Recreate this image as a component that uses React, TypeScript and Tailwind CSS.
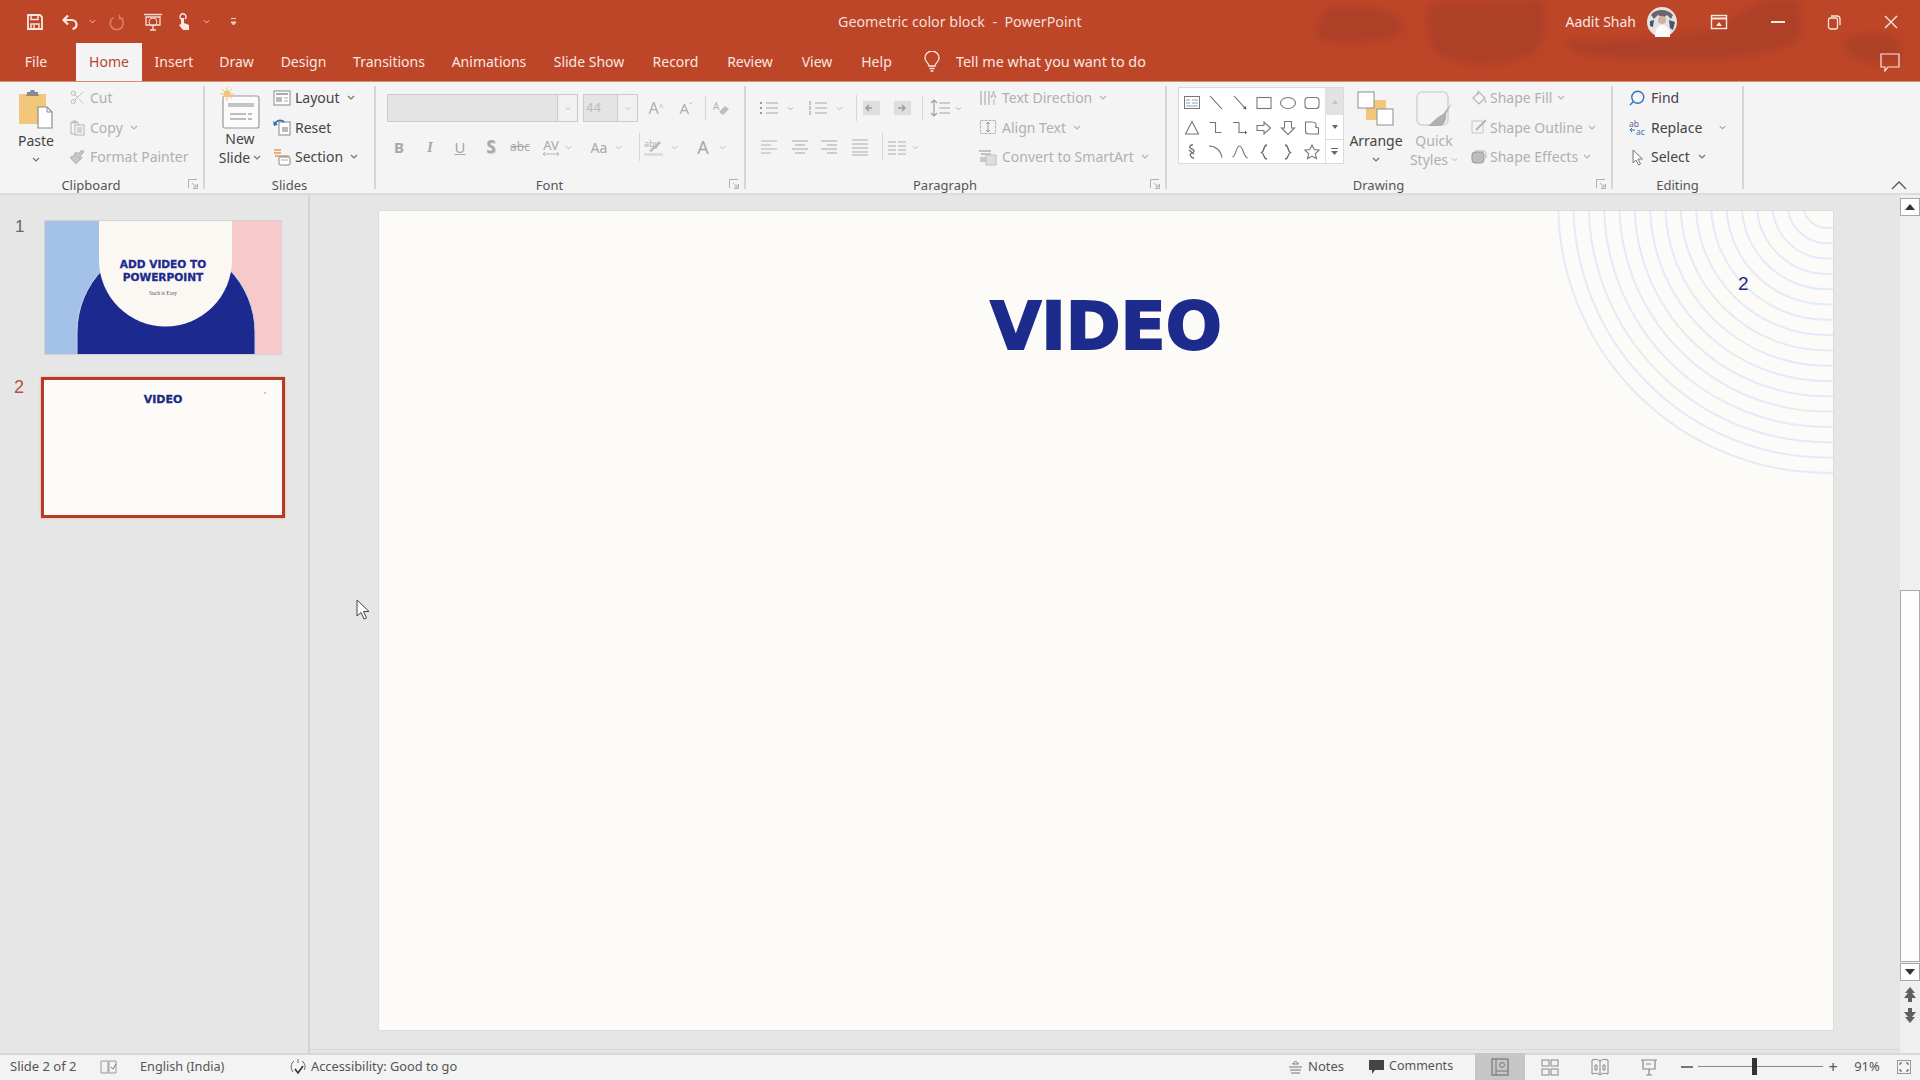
import React from "react";
import { Scissors, Search, Paintbrush } from "lucide-react";

const G = "#b3b3b3";
const K = "#6e6e6e";

function Chev({ c = G, w = 8, className = "" }: { c?: string; w?: number; className?: string }) {
  return (
    <svg width={w} height={5} viewBox="0 0 8 5" className={className}>
      <path d="M1 1l3 3 3-3" fill="none" stroke={c} strokeWidth="1.1" />
    </svg>
  );
}

function Ico({ w = 18, h = 18, children }: { w?: number; h?: number; children: React.ReactNode }) {
  return (
    <svg width={w} height={h} viewBox={`0 0 ${w} ${h}`} fill="none" className="shrink-0">
      {children}
    </svg>
  );
}

function Tab({ w, children, active }: { w: string; children: React.ReactNode; active?: boolean }) {
  return <div className={w + " h-full pb-[1px] flex items-center justify-center " + (active ? "bg-[#f4f4f4] text-[#b5472e]" : "")}>{children}</div>;
}

function Row({ icon, label, chev, dim, iw = "w-[18px]", gap = "gap-[4px]" }: { icon: React.ReactNode; label: string; chev?: boolean; dim?: boolean; iw?: string; gap?: string }) {
  return (
    <div className={"h-[29.5px] flex items-center whitespace-nowrap " + gap + " " + (dim ? "text-[#b0b0b0]" : "text-[#444444]")}>
      <span className={iw + " flex justify-center"}>{icon}</span>
      <span>{label}</span>
      {chev && <Chev c={dim ? G : K} className="ml-[3px]" />}
    </div>
  );
}

function Launcher() {
  return (
    <svg width="10" height="10" viewBox="0 0 10 10" fill="none" className="absolute right-[5px] bottom-[0px]">
      <path d="M.5 9V.5H9M9.5 5v4.5H5M4 4l4 4M8 5.5V8H5.5" stroke="#b0b0b0" />
    </svg>
  );
}

function GroupLabel({ children, launcher }: { children: React.ReactNode; launcher?: boolean }) {
  return <div className={"h-[13px] shrink-0 flex items-center justify-center text-[13px] text-[#555555] leading-none " + (launcher ? "pr-[21px]" : "")}>{children}</div>;
}

function Group({ w, children, label, launcher }: { w: string; children: React.ReactNode; label: string; launcher?: boolean }) {
  return (
    <div className={w + " relative shrink-0 my-[4px] flex flex-col border-r-2 border-[#d6d6d6]"}>
      <div className="h-[93px] shrink-0">{children}</div>
      <GroupLabel launcher={launcher}>{label}</GroupLabel>
      {launcher && <Launcher />}
    </div>
  );
}

function Lines({ ys, x1 = 1, x2 = 17, c = G, sw = 1.2 }: { ys: number[]; x1?: number; x2?: number; c?: string; sw?: number }) {
  return (
    <>
      {ys.map((y) => (
        <path key={y} d={`M${x1} ${y}H${x2}`} stroke={c} strokeWidth={sw} />
      ))}
    </>
  );
}

const shapes: React.ReactNode[] = [
  <><rect x="1.5" y="2.5" width="15" height="12" stroke="#777" /><path d="M3 6h4M3 9h4M9 6h6M9 9h6M3 12h12" stroke="#8aa0c0" /></>,
  <path d="M3 2l12 13" stroke="#666" strokeWidth="1.1" />,
  <><path d="M3 2l11 12" stroke="#666" strokeWidth="1.1" /><path d="M15.5 15.5l-3.5-1 2.5-2.5z" fill="#555" /></>,
  <rect x="2" y="3.5" width="14" height="11" stroke="#777" strokeWidth="1.1" />,
  <ellipse cx="9" cy="9" rx="7.5" ry="5.5" stroke="#777" strokeWidth="1.1" />,
  <rect x="2" y="3.5" width="14" height="11" rx="3" stroke="#777" strokeWidth="1.1" />,
  <path d="M9 2.5l6.5 12.5h-13z" stroke="#777" strokeWidth="1.1" />,
  <path d="M2.5 3.5h6v10h6" stroke="#777" strokeWidth="1.1" />,
  <><path d="M2 3.5h6v10h6" stroke="#777" strokeWidth="1.1" /><path d="M14 11.5l2 2-2 2z" fill="#555" /></>,
  <path d="M2 6.5h7v-3.5l6.5 6-6.5 6v-3.5h-7z" stroke="#777" strokeWidth="1.1" />,
  <path d="M5.5 2.5h7v6.5h3l-6.5 6.5-6.5-6.5h3z" stroke="#777" strokeWidth="1.1" />,
  <path d="M2.5 3h6c4 0 6 2 4 5l3 1v6h-10c-2 0-3-1.5-3-3z" stroke="#777" strokeWidth="1.1" />,
  <path d="M10 1.5C6 2.5 5.5 5 9 6c3 1 2.5 3 0 4-3 1-2 4 2 5.5M6 7l5 4" stroke="#777" strokeWidth="1.4" />,
  <path d="M2 3c6 0 12 4 13 12" stroke="#777" strokeWidth="1.1" />,
  <path d="M1.5 14C5 13 5 3 8.5 3s4 11 8 12" stroke="#777" strokeWidth="1.1" />,
  <path d="M12 2C8 2 10 8 6.5 9.5 10 11 8 16 12 16" stroke="#666" strokeWidth="1.3" />,
  <path d="M6 2c4 0 2 6 5.5 7.5C8 11 10 16 6 16" stroke="#666" strokeWidth="1.3" />,
  <path d="M9 2l2.1 4.6 5 .6-3.7 3.4 1 5-4.4-2.5-4.4 2.5 1-5L1.9 7.2l5-.6z" stroke="#777" strokeWidth="1.1" />,
];

function Thumb1() {
  return (
    <div className="relative w-[238px] h-[135px] ml-[3px] overflow-hidden border border-[#d2d2d2]">
      <svg width="238" height="135" viewBox="0 0 238 135" className="absolute left-0 top-0">
        <rect width="238" height="135" fill="#f6caca" />
        <rect width="55" height="135" fill="#a4c2e8" />
        <path d="M32 135V111a89 89 0 0 1 178 0v24z" fill="#1c2a8f" stroke="#c8d4ee" strokeWidth="1" />
        <path d="M54 0h133v39a66.5 66.5 0 0 1-133 0z" fill="#fbf8f3" />
      </svg>
      <div className="relative flex flex-col items-center pt-[37px] font-['DejaVu_Sans',sans-serif] font-bold text-[#1c2a8f] text-[10.6px] leading-[13px] text-center [-webkit-text-stroke:0.3px_#1c2a8f]">
        <div>ADD VIDEO TO</div>
        <div>POWERPOINT</div>
        <div className="font-['Liberation_Serif',serif] font-normal text-[5.5px] text-[#555577] leading-[8px] mt-[5px] [-webkit-text-stroke:0px]">Such is Easy</div>
      </div>
    </div>
  );
}

function Thumb2() {
  return (
    <div className="relative w-[244px] h-[141px] border-[3px] border-[#b53c22] bg-[#fcfbf7] shadow-[0_0_2px_#e8a08c] flex flex-col items-center">
      <div className="mt-[13px] font-['DejaVu_Sans',sans-serif] font-bold text-[#1c2a7f] text-[11px] leading-[14px] [-webkit-text-stroke:0.3px_#1c2a7f]">VIDEO</div>
      <div className="absolute right-[16px] top-[12px] w-[2px] h-[2px] rounded-full bg-[#b8bccc]" />
    </div>
  );
}

const arcs = Array.from({ length: 17 }, (_, i) => 24 + i * 15.3);

export default function App() {
  return (
    <div className="relative w-[1920px] h-[1080px] overflow-hidden flex flex-col bg-[#e6e6e6] font-['Noto_Sans',sans-serif] text-[14px] text-[#444444]">
      {/* Title bar and tabs */}
      <header className="relative h-[82px] shrink-0 bg-[#bd4528] border-b border-[#d98b76] text-[#f8e8e2]">
        <svg width="640" height="81" viewBox="0 0 640 81" className="absolute right-0 top-0 blur-[3px]">
          <g fill="#a53f28" opacity=".6">
            <path d="M44 10C70 2 110 8 122 22c6 14-20 20-50 20-20 0-40 2-34-14z" />
            <path d="M150 4l112-4c6 20 4 46-14 56-30 12-80 10-94-6-8-16-8-30-4-46z" />
            <path d="M290 40c60 4 110-8 150-10 30-30 40-20 40-30h40c-4 30 10 34-10 44-40 18-120 18-170 14-30-2-60-6-50-18z" />
            <path d="M565 40c20-10 50-8 55 6v16h-30c-14 0-30-10-25-22z" />
          </g>
        </svg>
        <div className="relative h-[43px] flex items-center">
          <div className="w-[838px] flex items-center shrink-0">
            <span className="ml-[26px] w-[18px]">
              <Ico>
                <path d="M2 2h12l2 2v12H2z" stroke="#f8e8e2" strokeWidth="1.8" />
                <path d="M5 2.5v4h7v-4" stroke="#f8e8e2" strokeWidth="1.4" />
                <path d="M5 16v-5h8v5M8 12v3" stroke="#f8e8e2" strokeWidth="1.4" />
              </Ico>
            </span>
            <span className="ml-[17px] w-[18px]">
              <Ico>
                <path d="M7 2.5L2.5 7 7 11.5M3 7h7.5c3 0 5 2 5 4.5s-1.5 4-4 4.5" stroke="#f8e8e2" strokeWidth="2.2" />
              </Ico>
            </span>
            <Chev c="#f0cfc5" w={7} className="ml-[10px]" />
            <span className="ml-[12px] w-[18px] opacity-60">
              <Ico>
                <path d="M12 4.5a6.5 6.5 0 1 1-6.5 0" stroke="#e8a08c" strokeWidth="1.8" />
                <path d="M11.5 1.5v4h4" stroke="#e8a08c" strokeWidth="1.4" />
              </Ico>
            </span>
            <span className="ml-[17px] w-[20px]">
              <Ico w={20} h={20}>
                <path d="M1 2.5h18M3 5h14v8H3zM10 13v5M7 18h6" stroke="#f4dcd4" strokeWidth="1.3" />
                <circle cx="10" cy="10" r="4" stroke="#f4dcd4" />
              </Ico>
            </span>
            <span className="ml-[11px] w-[18px]">
              <Ico>
                <path d="M7 6a3 3 0 1 1 4 0" stroke="#f8e8e2" strokeWidth="1.4" />
                <path d="M7 5h3v5l5 2v5H9l-4-5 2-1z" fill="#f8e8e2" />
              </Ico>
            </span>
            <Chev c="#f0cfc5" w={7} className="ml-[11px]" />
            <span className="ml-[20px]">
              <svg width="7" height="10" viewBox="0 0 7 10"><path d="M1 1.5h5M1 5l2.5 3L6 5z" stroke="#f0cfc5" fill="#f0cfc5" /></svg>
            </span>
          </div>
          <div className="text-[#f4dfd8] text-[14.3px]">Geometric color block&nbsp; -&nbsp; PowerPoint</div>
          <div className="ml-auto flex items-center">
            <span className="text-[#f8e8e2]">Aadit Shah</span>
            <svg width="30" height="30" viewBox="0 0 30 30" className="ml-[11px]">
              <circle cx="15" cy="15" r="15" fill="#e4e2e2" />
              <path d="M4 8C8 2 20 1 26 8l-2 4-4-4-4 3-5-3-4 4z" fill="#6a666c" />
              <path d="M8 30c0-8 3-12 7-12s9 3 8 12z" fill="#fbfbfb" />
              <path d="M22 13l6 2-2 8-3-2zM3 14l4-1-1 7-3-1z" fill="#46566f" />
              <circle cx="15" cy="13" r="4" fill="#d2b0a0" />
            </svg>
            <span className="ml-[33px]">
              <Ico>
                <rect x="1.5" y="2.5" width="15" height="13" stroke="#f8e8e2" strokeWidth="1.4" />
                <path d="M1.5 5.5h15" stroke="#f8e8e2" strokeWidth="2" />
                <path d="M6 13l3-4 3 4z" fill="#f8e8e2" />
              </Ico>
            </span>
            <span className="ml-[43px] w-[14px] h-[2px] bg-[#f8e8e2]" />
            <span className="ml-[42px]">
              <Ico w={14} h={16}>
                <rect x="1.5" y="4" width="9" height="11" rx="2" stroke="#f8e8e2" strokeWidth="1.3" />
                <path d="M4 2h6c2 0 3 1 3 3v6" stroke="#f8e8e2" strokeWidth="1.3" />
              </Ico>
            </span>
            <span className="ml-[42px] mr-[21px]">
              <Ico w={16} h={16}>
                <path d="M2 2l12 12M14 2L2 14" stroke="#f8e8e2" strokeWidth="1.4" />
              </Ico>
            </span>
          </div>
        </div>
        <div className="relative h-[38px] flex items-stretch">
          <Tab w="w-[72px]">File</Tab>
          <div className="w-[4px]" />
          <Tab w="w-[66px]" active>Home</Tab>
          <Tab w="w-[64px]">Insert</Tab>
          <Tab w="w-[61px]">Draw</Tab>
          <Tab w="w-[73px]">Design</Tab>
          <Tab w="w-[98px]">Transitions</Tab>
          <Tab w="w-[102px]">Animations</Tab>
          <Tab w="w-[98px]">Slide Show</Tab>
          <Tab w="w-[75px]">Record</Tab>
          <Tab w="w-[74px]">Review</Tab>
          <Tab w="w-[60px]">View</Tab>
          <Tab w="w-[59px]">Help</Tab>
          <div className="ml-[17px] pb-[1px] flex items-center">
            <svg width="18" height="22" viewBox="0 0 18 22" fill="none">
              <path d="M6 15c0-3-4-4-4-8a7 7 0 0 1 14 0c0 4-4 5-4 8z" stroke="#f8e8e2" strokeWidth="1.3" />
              <path d="M6.5 17.5h5M7.5 20h3" stroke="#f8e8e2" strokeWidth="1.6" />
            </svg>
          </div>
          <div className="ml-[15px] pb-[1px] flex items-center text-[14.4px]">Tell me what you want to do</div>
          <div className="ml-auto mr-[20px] flex items-center">
            <svg width="20" height="20" viewBox="0 0 20 20" fill="none">
              <path d="M1 2h18v13H8l-3 4v-4H1z" stroke="#f8e8e2" strokeWidth="1.2" />
            </svg>
          </div>
        </div>
      </header>

      {/* Ribbon */}
      <section className="h-[113px] shrink-0 flex bg-[#f4f4f4] border-b-2 border-[#dcdcdc]">
        <Group w="w-[205px]" label="Clipboard" launcher>
          <div className="flex -mt-[3px] h-full">
            <div className="w-[64px] ml-[4px] flex flex-col items-center pt-[5px]">
              <svg width="36" height="41" viewBox="0 0 36 41" fill="none">
                <rect x="1" y="6" width="27" height="30" rx="1" fill="#f2c77b" />
                <path d="M9 6V4h3c0-3 5-3 5 0h3v2l1 2H8z" fill="#8a8a8a" />
                <path d="M20 19h9l5 5v16H20z" fill="#fff" stroke="#8d8d8d" strokeWidth="1.2" />
                <path d="M29 19v5h5" stroke="#8d8d8d" />
              </svg>
              <div className="h-[19px] leading-[19px] mt-[2px]">Paste</div>
              <div className="h-[19px] flex items-center"><Chev c={K} /></div>
            </div>
            <div>
              <Row dim icon={<Scissors size={17} strokeWidth={1.2} color={G} />} label="Cut" />
              <Row dim chev icon={<Ico><path d="M3 4h7v12H3z" stroke={G} /><rect x="7" y="7" width="9" height="10" fill="#f4f4f4" stroke={G} /><path d="M9 10h5M9 12h5M9 14h5M5 3h3v2H5z" stroke={G} /></Ico>} label="Copy" />
              <Row dim icon={<Paintbrush size={16} strokeWidth={1.4} color="#a8a8a8" fill="#c8c8c8" />} label="Format Painter" />
            </div>
          </div>
        </Group>
        <Group w="w-[171px]" label="Slides">
          <div className="flex -mt-[3px] h-full">
            <div className="w-[66px] ml-[2px] flex flex-col items-center pt-[4px]">
              <svg width="40" height="42" viewBox="0 0 40 42" fill="none">
                <rect x="3" y="9" width="36" height="32" rx="2" fill="#fbfbfb" stroke="#9a9a9a" strokeWidth="1.2" />
                <path d="M8 18h26" stroke="#c4c4c4" strokeWidth="4" />
                <path d="M10 27h22M10 32h22" stroke="#aaa" strokeWidth="1.3" strokeDasharray="16 2" />
                <circle cx="7" cy="7" r="3.5" fill="#f2c77b" />
                <path d="M7 0v14M0 7h14M2 2l10 10M12 2L2 12" stroke="#f2c77b" />
              </svg>
              <div className="h-[19px] leading-[19px]">New</div>
              <div className="h-[19px] leading-[19px] flex items-center gap-[3px]">Slide<Chev c={K} /></div>
            </div>
            <div>
              <Row chev gap="gap-[4px]" icon={<Ico><rect x="1" y="2" width="16" height="14" fill="#fff" stroke="#888" /><path d="M3 5h12" stroke="#aaa" strokeWidth="2" /><path d="M3 8h6v5H3z" fill="#bbb" /><path d="M11 9h4M11 12h4" stroke="#aaa" /></Ico>} label="Layout" />
              <Row gap="gap-[4px]" icon={<Ico><rect x="6" y="4" width="11" height="13" fill="#fff" stroke="#888" /><path d="M9 9h6v5H9z" fill="#bbb" /><path d="M1.5 7C3 2 8 1 11 4" stroke="#2f6fb3" strokeWidth="1.8" /><path d="M0 3l1 5 4-1.5z" fill="#2f6fb3" /></Ico>} label="Reset" />
              <Row chev gap="gap-[4px]" icon={<Ico><path d="M1 2h7M1 5h7" stroke="#e59a5c" strokeWidth="1.5" /><path d="M2 8h14" stroke="#e59a5c" strokeWidth="1.5" /><rect x="6" y="9" width="11" height="8" rx="1" fill="#fff" stroke="#888" /><path d="M8 12h7" stroke="#aaa" /></Ico>} label="Section" />
            </div>
          </div>
        </Group>
        <Group w="w-[370px]" label="Font" launcher>
          <div className="pl-[11px] pt-[8px] text-[#b0b0b0]">
            <div className="h-[28px] flex items-center">
              <div className="w-[191px] h-[28px] flex bg-[#e4e4e4] border border-[#cbcbcb]">
                <div className="flex-1" />
                <div className="w-[20px] bg-[#f1f1f1] border-l border-[#cbcbcb] flex items-center justify-center"><Chev w={6} /></div>
              </div>
              <div className="w-[55px] h-[28px] ml-[5px] flex bg-[#e4e4e4] border border-[#cbcbcb] items-stretch">
                <div className="flex-1 pl-[2px] text-[13px] flex items-center text-[#bcbcbc]">44</div>
                <div className="w-[20px] bg-[#f1f1f1] border-l border-[#cbcbcb] flex items-center justify-center"><Chev w={6} /></div>
              </div>
              <div className="w-[30px] ml-[3px] text-center text-[16px] leading-none">A<sup className="text-[8px]">^</sup></div>
              <div className="w-[30px] text-center text-[15px] leading-none">A<sup className="text-[8px]">ˇ</sup></div>
              <div className="w-px h-[24px] ml-[4px] bg-[#d6d6d6]" />
              <div className="w-[30px] flex justify-center">
                <Ico><text x="1" y="11" fontSize="10" fill={G}>A</text><path d="M7 13l6-6 4 3-6 6z" fill="#bdbdbd" /></Ico>
              </div>
            </div>
            <div className="h-[28px] mt-[11px] flex items-center text-[15px] text-[#a8a8a8]">
              <div className="w-[24px] text-center font-bold">B</div>
              <div className="w-[24px] ml-[7px] text-center italic font-['Liberation_Serif',serif] font-bold">I</div>
              <div className="w-[24px] ml-[6px] text-center underline">U</div>
              <div className="w-[24px] ml-[7px] text-center font-bold text-[17px] [text-shadow:1px_1px_1px_#ccc]">S</div>
              <div className="w-[24px] ml-[5px] text-center text-[12px] line-through">abc</div>
              <div className="w-[24px] ml-[7px] flex flex-col items-center text-[13px] leading-[14px]">
                <span>AV</span>
                <svg width="18" height="4" viewBox="0 0 18 4"><path d="M1 2h16M3 0L1 2l2 2M15 0l2 2-2 2" stroke={G} fill="none" /></svg>
              </div>
              <div className="w-[10px] ml-[2px]"><Chev w={7} /></div>
              <div className="w-[24px] ml-[12px] text-center text-[14px]">Aa</div>
              <div className="w-[10px] ml-[4px]"><Chev w={7} /></div>
              <div className="w-px h-[28px] ml-[14px] bg-[#d6d6d6]" />
              <div className="w-[24px] ml-[2px] flex justify-center">
                <Ico w={22} h={20}><text x="1" y="10" fontSize="9" fill={G}>aby</text><path d="M6 14L16 4l2 2L8 15z" fill="#b8b8b8" /><rect x="1" y="16" width="19" height="3" fill="#dcdcdc" /></Ico>
              </div>
              <div className="w-[10px] ml-[5px]"><Chev w={7} /></div>
              <div className="w-[24px] ml-[10px] text-center text-[18px] leading-none">A</div>
              <div className="w-[10px] ml-[4px]"><Chev w={7} /></div>
            </div>
          </div>
        </Group>
        <Group w="w-[421px]" label="Paragraph" launcher>
          <div className="flex h-full">
            <div className="w-[232px] pl-[12px] pt-[8px] shrink-0">
              <div className="h-[28px] flex items-center">
                <div className="w-[22px]"><Ico w={22}><Lines ys={[4, 9, 14]} x1={8} x2={20} /><path d="M2 4h3M2 9h3M2 14h3" stroke="#999" strokeWidth="2" strokeDasharray="2 1" /></Ico></div>
                <div className="w-[10px] ml-[7px]"><Chev w={7} /></div>
                <div className="w-[22px] ml-[10px]"><Ico w={22}><Lines ys={[4, 9, 14]} x1={8} x2={20} /><path d="M3 2v4M3 7v4M3 12v4" stroke="#aaa" strokeWidth="1.4" /></Ico></div>
                <div className="w-[10px] ml-[7px]"><Chev w={7} /></div>
                <div className="w-px h-[26px] ml-[10px] bg-[#d6d6d6]" />
                <div className="w-[22px] ml-[4px]"><Ico w={22}><rect x="2" y="2" width="17" height="14" fill="#dedede" /><path d="M11 9H5M8 6L5 9l3 3" stroke="#9a9a9a" strokeWidth="1.4" /></Ico></div>
                <div className="w-[22px] ml-[9px]"><Ico w={22}><rect x="2" y="2" width="17" height="14" fill="#dedede" /><path d="M6 9h7M10 6l3 3-3 3" stroke="#9a9a9a" strokeWidth="1.4" /></Ico></div>
                <div className="w-px h-[26px] ml-[8px] bg-[#d6d6d6]" />
                <div className="w-[22px] ml-[6px]"><Ico w={22}><Lines ys={[4, 9, 14]} x1={10} x2={21} /><path d="M5 1v16M2 4l3-3 3 3M2 14l3 3 3-3" stroke="#a0a0a0" strokeWidth="1.2" /></Ico></div>
                <div className="w-[10px] ml-[4px]"><Chev w={7} /></div>
              </div>
              <div className="h-[28px] mt-[11px] flex items-center">
                <div className="w-[22px]"><Ico w={22}><Lines ys={[3, 7, 11, 15]} x1={3} x2={19} sw={1.8} c="#d0d0d0" /><Lines ys={[7, 15]} x1={13} x2={20} c="#f4f4f4" sw={2} /></Ico></div>
                <div className="w-[22px] ml-[9px]"><Ico w={22}><Lines ys={[3, 11]} x1={3} x2={19} sw={1.8} c="#c8c8c8" /><Lines ys={[7, 15]} x1={6} x2={16} sw={1.8} c="#c8c8c8" /></Ico></div>
                <div className="w-[22px] ml-[7px]"><Ico w={22}><Lines ys={[3, 11]} x1={3} x2={19} sw={1.8} c="#c8c8c8" /><Lines ys={[7, 15]} x1={9} x2={19} sw={1.8} c="#c8c8c8" /></Ico></div>
                <div className="w-[22px] ml-[9px]"><Ico w={22}><Lines ys={[2, 6, 10, 14, 17]} x1={3} x2={19} sw={1.4} c="#c0c0c0" /></Ico></div>
                <div className="w-px h-[28px] ml-[11px] bg-[#d6d6d6]" />
                <div className="w-[22px] ml-[3px]"><Ico w={22}><Lines ys={[4, 8, 12, 16]} x1={2} x2={10} sw={1.4} c="#c0c0c0" /><Lines ys={[4, 8, 12, 16]} x1={12} x2={20} sw={1.4} c="#c0c0c0" /></Ico></div>
                <div className="w-[10px] ml-[4px]"><Chev w={7} /></div>
              </div>
            </div>
            <div className="-mt-[3px]">
              <Row dim chev iw="w-[20px]" icon={<Ico><path d="M2 2v14M6 2v14M10 2v14" stroke={G} strokeWidth="1.3" /><path d="M12 9l2.5-7L17 9M13 7h3M15 10v6" stroke={G} /></Ico>} label="Text Direction" />
              <Row dim chev iw="w-[20px]" icon={<Ico><rect x="1.5" y="2.5" width="15" height="13" stroke={G} strokeDasharray="3 1" /><path d="M9 4v10M7 6l2-2 2 2M7 12l2 2 2-2" stroke="#999" /></Ico>} label="Align Text" />
              <Row dim chev iw="w-[20px]" icon={<Ico w={20}><path d="M1 3h12M3 6h10" stroke={G} strokeWidth="1.6" /><path d="M2 9h6v5H2z" fill="#c8c8c8" /><rect x="8" y="7" width="10" height="10" fill="#dedede" stroke="#c0c0c0" /></Ico>} label="Convert to SmartArt" />
            </div>
          </div>
        </Group>
        <Group w="w-[446px]" label="Drawing" launcher>
          <div className="flex pl-[11px] pt-[1px]">
            <div className="w-[166px] h-[77px] flex bg-white border border-[#dadada] shrink-0">
              <div className="w-[148px] pl-px pt-[3px] grid grid-cols-[repeat(6,24px)] auto-rows-[24.5px] place-items-center">
                {shapes.map((s, i) => (
                  <Ico key={i}>{s}</Ico>
                ))}
              </div>
              <div className="w-[18px] flex flex-col border-l border-[#e0e0e0]">
                <div className="h-[27px] bg-[#e2e2e2] flex items-center justify-center"><svg width="6" height="4" viewBox="0 0 6 4"><path d="M3 0l3 4H0z" fill="#c4c4c4" /></svg></div>
                <div className="h-[25px] flex items-center justify-center border-b border-[#dadada]"><svg width="6" height="4" viewBox="0 0 6 4"><path d="M3 4L0 0h6z" fill="#666" /></svg></div>
                <div className="flex-1 flex items-center justify-center"><svg width="7" height="7" viewBox="0 0 7 7"><path d="M0 0h7v1H0zM0 3h7L3.5 7z" fill="#666" /></svg></div>
              </div>
            </div>
            <div className="w-[64px] flex flex-col items-center pt-[4px] shrink-0">
              <svg width="38" height="36" viewBox="0 0 38 36" fill="none">
                <rect x="9" y="9" width="20" height="20" fill="#f2c77b" />
                <rect x="1" y="1" width="16" height="16" fill="#fff" stroke="#8d8d8d" />
                <rect x="20" y="18" width="16" height="16" fill="#fff" stroke="#8d8d8d" />
              </svg>
              <div className="h-[19px] leading-[19px] mt-[4px]">Arrange</div>
              <div className="h-[19px] flex items-center"><Chev c={K} /></div>
            </div>
            <div className="w-[52px] flex flex-col items-center pt-[4px] text-[#b0b0b0] shrink-0">
              <svg width="38" height="38" viewBox="0 0 38 38" fill="none">
                <rect x="2" y="1" width="31" height="33" rx="5" stroke="#d4d4d4" strokeWidth="1.6" />
                <path d="M37 12L28 23l-5 3-10 9h13c4-2 6-8 5-12z" fill="#b0b0b0" />
              </svg>
              <div className="h-[19px] leading-[19px] mt-[2px]">Quick</div>
              <div className="h-[19px] leading-[19px] flex items-center gap-[3px] whitespace-nowrap">Styles<Chev w={7} /></div>
            </div>
            <div className="-mt-[4px] ml-[10px]">
              <Row dim chev gap="gap-[2px]" icon={<Ico><path d="M3 9l6-6 6 6-6 6z" stroke={G} strokeWidth="1.2" /><path d="M8 6V1.5" stroke={G} /><path d="M15 10c1 2 2 3 1 4-1 0-2-1-1-4z" fill={G} /></Ico>} label="Shape Fill" />
              <Row dim chev gap="gap-[2px]" icon={<Ico><path d="M2 3h11v12H2z" stroke="#c4c4c4" /><path d="M6 12L16 2" stroke={G} strokeWidth="2" /></Ico>} label="Shape Outline" />
              <Row dim chev gap="gap-[2px]" icon={<Ico><rect x="2" y="4" width="12" height="11" rx="3" fill="#bdbdbd" stroke="#999" /><path d="M5 3h8c3 0 3 2 3 4v3" stroke={G} /></Ico>} label="Shape Effects" />
            </div>
          </div>
        </Group>
        <Group w="w-[131px]" label="Editing">
          <div className="-mt-[3px] pl-[15px]">
            <Row gap="gap-[5px]" icon={<Search size={18} strokeWidth={1.8} color="#2e75b6" className="-scale-x-100" />} label="Find" />
            <div className="h-[29.5px] flex items-center">
              <span className="w-[18px]">
                <Ico w={20} h={20}>
                  <text x="1" y="10" fontSize="8.5" fill="#7a4fa8">ab</text>
                  <text x="8" y="18" fontSize="8.5" fill="#2e75b6">ac</text>
                  <path d="M2 13h5M4 11l-2 2 2 2" stroke="#2e75b6" />
                </Ico>
              </span>
              <span className="ml-[5px]">Replace</span>
              <Chev c={K} w={7} className="ml-[17px]" />
            </div>
            <Row chev gap="gap-[5px]" icon={<Ico><path d="M5 2v13l3-3 2.5 5 2-1-2.5-5h4.5z" fill="#fff" stroke="#777" /></Ico>} label="Select" />
          </div>
        </Group>
        <div className="flex-1 flex items-end justify-end pr-[13px] pb-[3px]">
          <svg width="16" height="9" viewBox="0 0 16 9" fill="none"><path d="M1 8l7-7 7 7" stroke="#555" strokeWidth="1.3" /></svg>
        </div>
      </section>

      {/* Workspace */}
      <main className="flex-1 flex min-h-0 bg-[#e6e6e6]">
        <aside className="w-[310px] shrink-0 border-r-2 border-[#d4d4d4] pt-[25px]">
          <div className="flex">
            <div className="w-[41px] pl-[15px] -mt-[2px] text-[17px] leading-[18px] text-[#666666] font-['Liberation_Sans',sans-serif]">1</div>
            <Thumb1 />
          </div>
          <div className="flex mt-[22px]">
            <div className="w-[41px] pl-[14px] pt-[1px] text-[18px] leading-[18px] text-[#b5523c] font-['Liberation_Sans',sans-serif]">2</div>
            <Thumb2 />
          </div>
        </aside>
        <div className="flex-1 flex flex-col min-w-0">
          <div className="flex-1 pl-[68px] pt-[15px]">
            <div className="relative w-[1456px] h-[821px] bg-[#fcfbf8] border border-[#dcdcdc] flex flex-col items-center overflow-hidden">
              <svg width="1456" height="300" viewBox="0 0 1456 300" fill="none" className="absolute left-0 top-0">
                {arcs.map((r) => (
                  <circle key={r} cx="1448" cy="-7" r={r} stroke="#e3ebf6" strokeWidth="2" />
                ))}
              </svg>
              <div className="relative mt-[74px] font-['DejaVu_Sans',sans-serif] font-bold text-[66px] leading-[84px] text-[#1c2b8c] [-webkit-text-stroke:2px_#1c2b8c]">VIDEO</div>
              <div className="absolute left-[1359px] top-[59px] font-['Liberation_Sans',sans-serif] text-[19px] text-[#1c2b7c]">2</div>
            </div>
          </div>
          <div className="h-[4px] border-t border-[#d8d8d8]" />
        </div>
        <div className="w-[20px] shrink-0 bg-[#efefef] flex flex-col items-center">
          <div className="mt-[3px] w-[20px] h-[18px] bg-white border border-[#a6a6a6] flex items-center justify-center">
            <svg width="10" height="6" viewBox="0 0 10 6"><path d="M5 0l5 6H0z" fill="#333" /></svg>
          </div>
          <div className="h-[374px]" />
          <div className="w-[20px] h-[372px] bg-[#fdfdfd] border border-[#ababab]" />
          <div className="mt-px w-[20px] h-[18px] bg-white border border-[#a6a6a6] flex items-center justify-center">
            <svg width="10" height="6" viewBox="0 0 10 6"><path d="M5 6L0 0h10z" fill="#333" /></svg>
          </div>
          <svg width="14" height="16" viewBox="0 0 14 16" className="mt-[6px]"><path d="M7 0l5 6H9l4 5H9v4H5v-4H1l4-5H2z" fill="#606060" /></svg>
          <svg width="14" height="16" viewBox="0 0 14 16" className="mt-[4px]"><path d="M7 16L2 10h3L1 5h4V1h4v4h4l-4 5h3z" fill="#606060" /></svg>
        </div>
      </main>

      {/* Status bar */}
      <footer className="h-[27px] shrink-0 pb-[2px] flex items-center bg-[#f3f3f3] border-t-2 border-[#d8d8d8] text-[13px] text-[#555555]">
        <div className="w-[100px] pl-[10px] whitespace-nowrap">Slide 2 of 2</div>
        <div className="w-[18px]"><Ico h={16}><path d="M1 2h7v12H1zM9 2h7v12H9z" stroke="#999" /><path d="M11 8l2 2 3-5" stroke="#777" /></Ico></div>
        <div className="w-[171px] pl-[22px] whitespace-nowrap text-[12.7px]">English (India)</div>
        <div className="w-[18px]"><Ico><path d="M5 3C2 5 1 10 4 14M13 3c3 2 4 7 2 9" stroke="#666" /><path d="M9 1v4" stroke="#666" /><path d="M6 11l3 4 5-7" stroke="#333" strokeWidth="1.6" /></Ico></div>
        <div className="ml-[4px] whitespace-nowrap text-[12.8px]">Accessibility: Good to go</div>
        <div className="ml-auto flex items-center pr-[9px] h-[25px]">
          <Ico w={15} h={14}><path d="M7.5 1l3 3h-6zM1 7h13M2 10h11M3 13h9" stroke="#777" /></Ico>
          <span className="ml-[5px] w-[35px]">Notes</span>
          <span className="ml-[25px]"><Ico w={17} h={16}><path d="M1 1h15v10H7l-3 4v-4H1z" fill="#444" /></Ico></span>
          <span className="ml-[4px] w-[62px] text-[12.5px] whitespace-nowrap">Comments</span>
          <div className="ml-[24px] w-[50px] h-[27px] bg-[#c6c6c6] flex items-center justify-center">
            <Ico w={18} h={18}><rect x="1" y="1" width="16" height="16" stroke="#777" strokeWidth="1.2" /><path d="M5 1v16M5 13h12" stroke="#777" /><circle cx="11" cy="7" r="2.4" stroke="#777" /></Ico>
          </div>
          <div className="w-[50px] flex justify-center"><Ico w={18} h={18}><rect x="1" y="2" width="7" height="6" stroke="#888" /><rect x="10" y="2" width="7" height="6" stroke="#888" /><rect x="1" y="11" width="7" height="6" stroke="#888" /><rect x="10" y="11" width="7" height="6" stroke="#888" /></Ico></div>
          <div className="w-[50px] flex justify-center"><Ico w={18} h={18}><path d="M1 2c3-1 6-1 8 1 2-2 5-2 8-1v14c-3-1-6-1-8 1-2-2-5-2-8-1zM9 3v14" stroke="#888" /><path d="M4 7h2v5H4zM12 7h2v5h-2z" stroke="#888" /></Ico></div>
          <div className="w-[48px] flex justify-center"><Ico w={18} h={18}><path d="M1 2h16M3 2v9h12V2M9 11v6M6 17h6M6 6h5" stroke="#888" strokeWidth="1.2" /></Ico></div>
          <div className="w-[12px] h-[2px] ml-[8px] bg-[#777777]" />
          <div className="relative w-[125px] h-px ml-[5px] bg-[#888888]">
            <div className="absolute left-[54px] -top-[8px] w-[5px] h-[17px] bg-[#333333]" />
          </div>
          <span className="w-[12px] ml-[4px] text-center text-[16px] leading-none">+</span>
          <span className="w-[32px] ml-[12px] text-center whitespace-nowrap">91%</span>
          <span className="ml-[14px]"><Ico w={14} h={16}><rect x=".5" y="1.5" width="13" height="13" stroke="#999" /><path d="M3 6V4h2M9 4h2v2M11 10v2H9M5 12H3v-2" stroke="#555" /></Ico></span>
        </div>
      </footer>

      {/* Mouse pointer */}
      <svg width="14" height="22" viewBox="0 0 14 22" className="absolute left-[356px] top-[599px]">
        <path d="M1 1v16l4-3.5 3 6.5 2.5-1-3-6.5h5.5z" fill="#fff" stroke="#444" strokeWidth="1" />
      </svg>
    </div>
  );
}
